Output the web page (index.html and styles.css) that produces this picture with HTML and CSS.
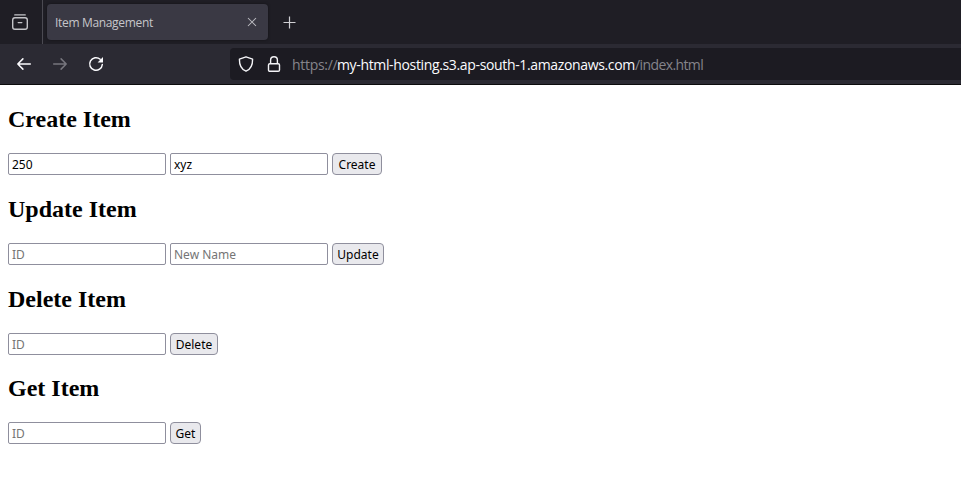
FILE: index.html
```html
<!DOCTYPE html>
<html lang="en">
<head>
<meta charset="utf-8">
<title>Item Management</title>
<link rel="stylesheet" href="styles.css">
</head>
<body>
<header class="browser">
  <div class="tabs">
    <div class="view">
      <svg width="18" height="18" viewBox="0 0 18 18" fill="none" stroke="#c4c4c8" stroke-width="1.4" stroke-linecap="round"><path d="M3.8 1.9h10.4"/><rect x="1.7" y="4.7" width="14.6" height="11.6" rx="2.2"/><path d="M7.2 9.6h3.6"/></svg>
    </div>
    <div class="tab">
      <span class="tab-title">Item Management</span>
      <svg width="10" height="10" viewBox="0 0 10 10" stroke="#bcbcc2" stroke-width="1.05"><path d="M1 1l8 8M9 1l-8 8"/></svg>
    </div>
    <svg class="plus" width="14" height="14" viewBox="0 0 14 14" stroke="#d0d0d4" stroke-width="1.2"><path d="M6.5 1.5v12M.5 7.5h12"/></svg>
  </div>
  <div class="toolbar">
    <svg class="back" width="16" height="16" viewBox="0 0 16 16" fill="none" stroke="#fbfbfe" stroke-width="1.5" stroke-linecap="round" stroke-linejoin="round"><path d="M14.3 8H1.8M6.9 2.9L1.8 8l5.1 5.1"/></svg>
    <svg class="forward" width="16" height="16" viewBox="0 0 16 16" fill="none" stroke="#77767e" stroke-width="1.5" stroke-linecap="round" stroke-linejoin="round"><path d="M1.7 8h12.5M9.1 2.9L14.2 8l-5.1 5.1"/></svg>
    <svg class="reload" width="16" height="16" viewBox="0 0 16 16" fill="none" stroke="#fbfbfe" stroke-width="1.5" stroke-linecap="round"><path d="M14.3 8.5A6.3 6.3 0 1 1 12.2 3.3"/><path d="M15 1v5.4H9.6z" fill="#fbfbfe" stroke="none"/></svg>
    <div class="address">
      <svg class="shield" width="16" height="16" viewBox="0 0 16 16" fill="none" stroke="#f3f3f6" stroke-width="1.4" stroke-linejoin="round"><path d="M8 .8L14.6 3.2C14.7 9 12.4 13.4 8 15.2 3.6 13.4 1.3 9 1.4 3.2z"/></svg>
      <svg class="lock" width="14" height="16" viewBox="0 0 14 16" fill="none" stroke="#f3f3f6" stroke-width="1.4"><rect x="1.5" y="7.7" width="11" height="7.6" rx="1.3"/><path d="M3.6 7.5V4.2a3.4 3.4 0 0 1 6.8 0v3.3"/></svg>
      <span class="url"><span class="scheme">https://</span><span class="host">my-html-hosting.s3.ap-south-1.amazonaws.com</span><span class="path">/index.html</span></span>
    </div>
  </div>
</header>
<main>
  <h2>Create Item</h2>
  <form><input type="text" placeholder="ID" value="250"><input type="text" placeholder="Name" value="xyz"><button class="create" type="button">Create</button></form>
  <h2>Update Item</h2>
  <form><input type="text" placeholder="ID"><input type="text" placeholder="New Name"><button class="update" type="button">Update</button></form>
  <h2>Delete Item</h2>
  <form><input type="text" placeholder="ID"><button class="delete" type="button">Delete</button></form>
  <h2 class="last">Get Item</h2>
  <form><input type="text" placeholder="ID"><button class="get" type="button">Get</button></form>
</main>
</body>
</html>
```
FILE: styles.css
```css
* { box-sizing: border-box; }
body { margin: 0; background: #fff; color: #000; overflow: hidden; }
svg { display: block; flex: none; }
.browser { height: 85px; background: #2b2a33; border-bottom: 1px solid #0c0c0d; font-family: "Open Sans", sans-serif; }
.tabs { display: flex; align-items: center; height: 44px; background: #1f1e25; }
.view { width: 43px; height: 44px; padding: 13px 0 0 11px; border-right: 1px solid #4b4a52; }
.tab { display: flex; align-items: center; justify-content: space-between; width: 221px; height: 36px; margin-left: 4px; padding: 0 11px 0 8px; border-radius: 4px; background: #3a3944; box-shadow: 0 0 3px rgba(0,0,0,.4); }
.tab-title { padding-top: 2px; font-size: 12px; line-height: 16px; letter-spacing: -.33px; color: #c6c6ca; white-space: nowrap; }
.plus { margin-left: 15px; }
.toolbar { display: flex; align-items: center; height: 40px; }
.back { margin-left: 16px; }
.forward { margin-left: 20px; }
.reload { margin-left: 20px; }
.address { display: flex; align-items: center; flex: 1; height: 32px; margin-left: 126px; padding-left: 8px; border-radius: 4px 0 0 4px; background: #1c1b22; }
.lock { margin-left: 13px; }
.url { display: flex; margin-left: 11px; padding-top: 2px; font-size: 14px; line-height: 20px; white-space: nowrap; color: #85848b; }
.scheme { width: 45px; letter-spacing: -.3px; }
.host { width: 298px; letter-spacing: -.35px; color: #fbfbfe; }
.path { letter-spacing: -.6px; }
main { padding: 20px 8px 0; }
h2 { height: 28px; margin: 0 0 20px; font: bold 24px/28px "Liberation Serif", serif; }
.last { margin-top: -1px; }
form { display: flex; gap: 4px; height: 22px; margin-bottom: 20px; }
input, button { height: 22px; margin: 0; border: 1px solid #8f8f9d; font: 12px/16px "Noto Sans", sans-serif; color: #000; }
input { width: 158px; padding: 1px 3px; border-radius: 2px; background: #fff; }
input::placeholder { color: #757575; opacity: 1; }
button { padding: 2px 0 0; border-radius: 4px; background: #e9e9ed; text-align: center; }
.create { width: 50px; }
.update { width: 52px; }
.delete { width: 48px; }
.get { width: 31px; }
```
